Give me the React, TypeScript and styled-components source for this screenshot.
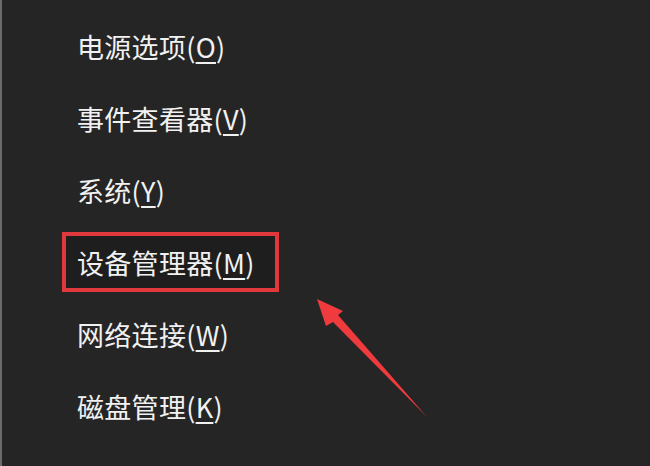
import React from 'react';
import styled, { createGlobalStyle } from 'styled-components';

const GlobalStyle = createGlobalStyle`
  html, body {
    margin: 0;
    padding: 0;
    background: #252525;
  }
  body {
    font-family: "Noto Sans CJK SC", "Noto Sans", sans-serif;
  }
`;

const Screen = styled.div`
  position: relative;
  width: 650px;
  height: 466px;
  overflow: hidden;
  background: #252525;
  border-left: 2px solid #6c6c6c;
  box-sizing: border-box;
`;

const Menu = styled.ul`
  list-style: none;
  margin: 0;
  padding: 10px 0 0 75px;
  display: flex;
  flex-direction: column;
`;

const Item = styled.li`
  height: 72px;
  display: flex;
  align-items: center;
`;

const Label = styled.span<{ $highlight?: boolean }>`
  font-size: 27px;
  line-height: 1;
  color: #f1f1f1;
  white-space: nowrap;
  letter-spacing: 0.3px;
  display: flex;
  align-items: center;
  box-sizing: border-box;
  ${({ $highlight }) =>
    $highlight &&
    `
    height: 60px;
    margin-left: -15px;
    padding: 0 20px 0 11px;
    border: 4px solid #e0383c;
    background: #1e1e1e;
  `}

  u {
    text-decoration-thickness: 2px;
    text-underline-offset: 4px;
  }
`;

const Arrow = styled.svg`
  position: absolute;
  left: 300px;
  top: 285px;
`;

const items = [
  { text: '电源选项', key: 'O' },
  { text: '事件查看器', key: 'V' },
  { text: '系统', key: 'Y' },
  { text: '设备管理器', key: 'M', highlight: true },
  { text: '网络连接', key: 'W' },
  { text: '磁盘管理', key: 'K' },
];

const App = () => (
  <>
    <GlobalStyle />
    <Screen>
      <Menu>
        {items.map((it) => (
          <Item key={it.key}>
            <Label $highlight={it.highlight}>
              {it.text}(<u>{it.key}</u>)
            </Label>
          </Item>
        ))}
      </Menu>
      <Arrow width="140" height="140" viewBox="0 0 140 140">
        <path d="M15 14 L41 26 L36 30 L125 132 L31 37 L24 41 Z" fill="#ef3b3d" />
      </Arrow>
    </Screen>
  </>
);

export default App;
